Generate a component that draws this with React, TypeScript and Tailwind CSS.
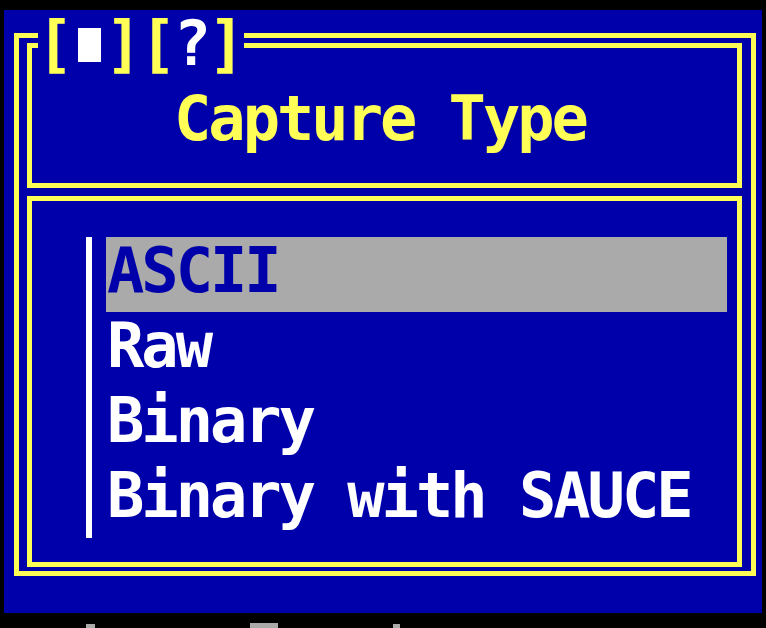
import React from "react";

const Y = "text-[#ffff55]";

function Cell({ children, className = "" }: { children?: React.ReactNode; className?: string }) {
  return (
    <span className={`w-[34.3px] h-[75px] flex justify-center text-[62px] leading-[67px] ${className}`}>
      {children}
    </span>
  );
}

const items = ["ASCII", "Raw", "Binary", "Binary with SAUCE"];

export default function App() {
  return (
    <div className="w-[766px] h-[628px] bg-black pt-[10px] pl-[4px] overflow-hidden font-['DejaVu_Sans_Mono',monospace] font-bold">
      <div className="relative w-[758px] h-[603px] bg-[#0000aa] pl-[10px] pt-[23px]">
        <div className="w-[742px] h-[543px] border-[5px] border-[#ffff55] pl-[8px] pr-[9px] pt-[5px] flex flex-col gap-[8px]">
          <div className="h-[145px] border-[5px] border-[#ffff55] pt-[37px] pl-[142px]">
            <div className={`h-[75px] text-[62px] leading-[67px] tracking-[-3px] whitespace-pre ${Y}`}>
              Capture Type
            </div>
          </div>
          <div className="h-[371px] border-[5px] border-[#ffff55] pt-[36px] pl-[54px] flex items-start">
            <div className="w-[6px] h-[301px] bg-white" />
            <div className="ml-[15px] w-[620px] flex flex-col">
              {items.map((t, i) => (
                <div
                  key={t}
                  className={`h-[75px] text-[62px] leading-[67px] tracking-[-3px] whitespace-pre -ml-[1px] pl-[1px] ${
                    i === 0 ? "bg-[#aaaaaa] text-[#0000aa]" : "text-white"
                  }`}
                >
                  {t}
                </div>
              ))}
            </div>
          </div>
        </div>
        <div className="absolute left-[34px] top-0 h-[75px] w-[206px] bg-[#0000aa] flex">
          <Cell className={Y}>[</Cell>
          <span className="w-[34.3px] h-[75px] flex justify-center items-start pt-[18px]">
            <span className="w-[23px] h-[34px] bg-white" />
          </span>
          <Cell className={Y}>]</Cell>
          <Cell className={Y}>[</Cell>
          <Cell className="text-white">?</Cell>
          <Cell className={Y}>]</Cell>
        </div>
      </div>
      <div className="flex items-end h-[15px]">
        <span className="ml-[82px] w-[9px] h-[4px] bg-[#aaaaaa]" />
        <span className="ml-[155px] w-[28px] h-[5px] bg-[#aaaaaa]" />
        <span className="ml-[115px] w-[7px] h-[4px] bg-[#aaaaaa]" />
      </div>
    </div>
  );
}
